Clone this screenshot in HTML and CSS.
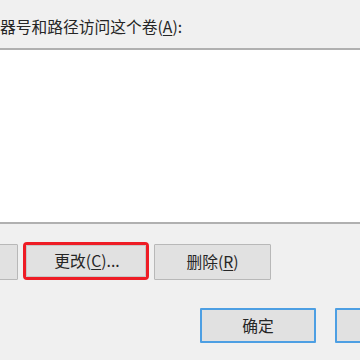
FILE: index.html
```html
<!DOCTYPE html>
<html>
<head>
<meta charset="utf-8">
<link rel="stylesheet" href="styles.css">
</head>
<body>
<div class="dialog">
  <div class="label">器号和路径访问这个卷(<u>A</u>):</div>
  <div class="listbox"></div>
  <div class="row actions">
    <div class="btn partial"></div>
    <div class="highlight"><div class="btn inner">更改(<u>C</u>)...</div></div>
    <div class="btn">删除(<u>R</u>)</div>
  </div>
  <div class="row footer">
    <div class="btn primary">确定</div>
    <div class="btn primary"></div>
  </div>
</div>
</body>
</html>
```
FILE: styles.css
```css
html, body {
  margin: 0;
  padding: 0;
  background: #f0f0f0;
  overflow: hidden;
}
.dialog {
  width: 360px;
  height: 360px;
  overflow: hidden;
  font-family: "Noto Sans CJK SC", "Noto Sans", sans-serif;
  font-size: 15.75px;
  color: #262626;
}
.label {
  padding-top: 17px;
  height: 48px;
  box-sizing: border-box;
  line-height: 20px;
  white-space: nowrap;
}
.label u, .btn u {
  text-decoration-thickness: 1px;
  text-underline-offset: 2px;
}
.listbox {
  margin: 0 -4px;
  height: 172px;
  background: #fff;
  border: 2px solid #b0b0b0;
}
.row {
  display: flex;
  align-items: flex-start;
}
.actions {
  margin-top: 19px;
  gap: 5px;
}
.btn {
  box-sizing: border-box;
  width: 117px;
  height: 36px;
  background: #e1e1e1;
  border: 1.5px solid #b8b8b8;
  border-radius: 1px;
  display: flex;
  align-items: center;
  justify-content: center;
  line-height: 20px;
  white-space: nowrap;
  flex: none;
}
.partial {
  margin-left: -99px;
  margin-top: 1px;
}
.highlight {
  box-sizing: border-box;
  width: 126px;
  height: 38px;
  border: 3px solid #ee1c25;
  border-radius: 4px;
  margin-top: -1px;
  flex: none;
  display: flex;
}
.highlight .inner {
  width: 100%;
  height: 100%;
  border: 1px solid #c8c8c8;
  padding-left: 2px;
}
.actions > .btn:last-child {
  margin-top: 1px;
}
.footer {
  margin-top: 28px;
  padding-left: 200px;
  gap: 19px;
}
.primary {
  width: 116px;
  height: 35px;
  border: 2px solid #4d9fe3;
}
```
